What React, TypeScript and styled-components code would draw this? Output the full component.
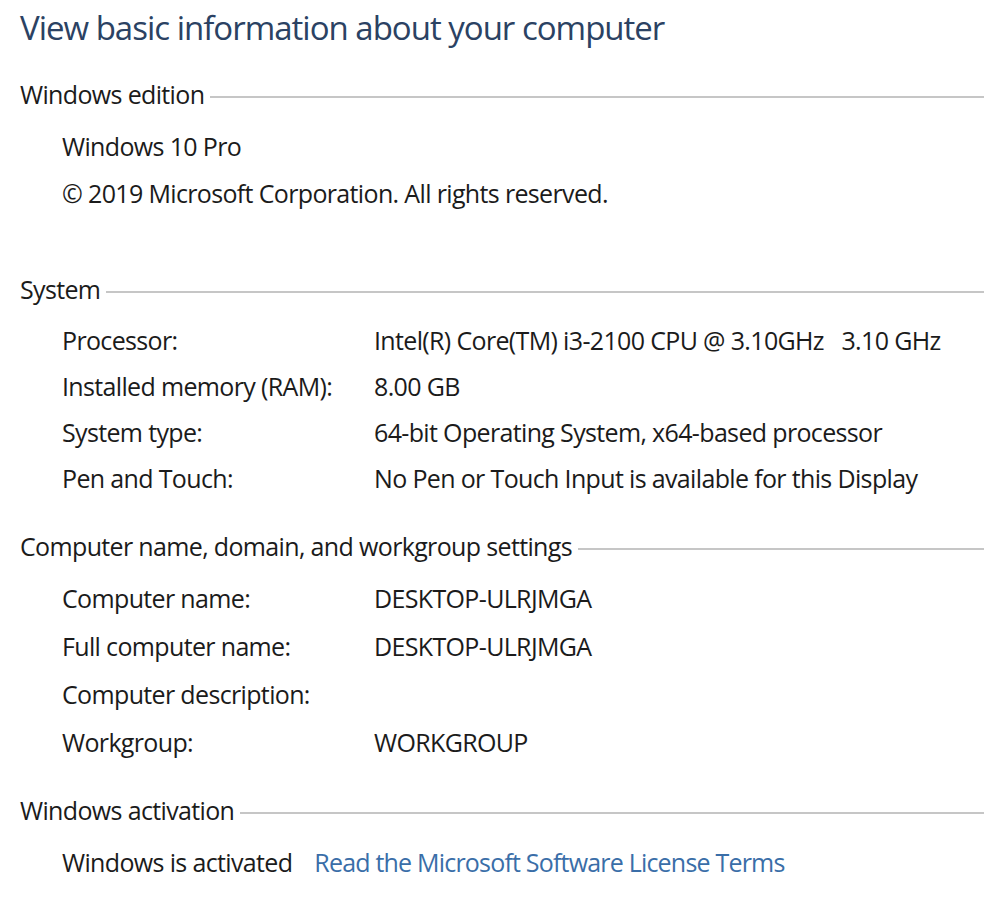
import styled, { createGlobalStyle } from 'styled-components'

const GlobalStyle = createGlobalStyle`
  html, body {
    margin: 0;
    padding: 0;
    background: #ffffff;
  }
  body {
    font-family: 'Open Sans', 'Noto Sans', sans-serif;
    color: #1b1b1b;
  }
`

interface Row {
  label: string
  value?: string
}

const systemRows: Row[] = [
  { label: 'Processor:', value: 'Intel(R) Core(TM) i3-2100 CPU @ 3.10GHz\u00a0\u00a0\u00a03.10 GHz' },
  { label: 'Installed memory (RAM):', value: '8.00 GB' },
  { label: 'System type:', value: '64-bit Operating System, x64-based processor' },
  { label: 'Pen and Touch:', value: 'No Pen or Touch Input is available for this Display' },
]

const nameRows: Row[] = [
  { label: 'Computer name:', value: 'DESKTOP-ULRJMGA' },
  { label: 'Full computer name:', value: 'DESKTOP-ULRJMGA' },
  { label: 'Computer description:' },
  { label: 'Workgroup:', value: 'WORKGROUP' },
]

function Section({
  title,
  gap,
  children,
}: {
  title: string
  gap: number
  children: React.ReactNode
}): JSX.Element {
  return (
    <SectionBox gap={gap}>
      <SectionHeader>
        <SectionTitle>{title}</SectionTitle>
        <Rule />
      </SectionHeader>
      {children}
    </SectionBox>
  )
}

function App(): JSX.Element {
  return (
    <Page>
      <GlobalStyle />
      <Title>View basic information about your computer</Title>

      <Section title="Windows edition" gap={18}>
        <Rows rowHeight={47}>
          <Text>Windows 10 Pro</Text>
          <Text>© 2019 Microsoft Corporation. All rights reserved.</Text>
        </Rows>
      </Section>

      <Section title="System" gap={53}>
        <Rows rowHeight={46}>
          {systemRows.map((r) => (
            <InfoRow key={r.label}>
              <Text>{r.label}</Text>
              <Text>{r.value}</Text>
            </InfoRow>
          ))}
        </Rows>
      </Section>

      <Section title="Computer name, domain, and workgroup settings" gap={25}>
        <Rows rowHeight={48}>
          {nameRows.map((r) => (
            <InfoRow key={r.label}>
              <Text>{r.label}</Text>
              <Text>{r.value ?? ''}</Text>
            </InfoRow>
          ))}
        </Rows>
      </Section>

      <Section title="Windows activation" gap={24}>
        <Rows rowHeight={48}>
          <ActivationRow>
            <Text>Windows is activated</Text>
            <Link href="#">Read the Microsoft Software License Terms</Link>
          </ActivationRow>
        </Rows>
      </Section>
    </Page>
  )
}

export default App

const Page = styled.div`
  width: 984px;
  height: 900px;
  overflow: hidden;
  padding-left: 20px;
  box-sizing: border-box;
`

const Title = styled.h1`
  margin: 0;
  height: 56px;
  line-height: 56px;
  font-size: 33px;
  font-weight: 400;
  letter-spacing: -1px;
  color: #2b4263;
`

const SectionBox = styled.section<{ gap: number }>`
  margin-top: ${({ gap }) => gap}px;
`

const SectionHeader = styled.div`
  display: flex;
  align-items: center;
  height: 40px;
`

const SectionTitle = styled.span`
  font-size: 25px;
  letter-spacing: -0.65px;
  white-space: nowrap;
  margin-right: 6px;
`

const Rule = styled.div`
  flex: 1;
  height: 2px;
  margin-top: 5px;
  background: #c6c6c6;
`

const Rows = styled.div<{ rowHeight: number }>`
  margin-top: 8px;
  padding-left: 42px;
  display: grid;
  grid-auto-rows: ${({ rowHeight }) => rowHeight}px;
  align-items: center;
`

const InfoRow = styled.div`
  display: grid;
  grid-template-columns: 312px 1fr;
  align-items: center;
`

const ActivationRow = styled.div`
  display: flex;
  align-items: center;
  gap: 22px;
`

const Text = styled.span`
  font-size: 25px;
  letter-spacing: -0.65px;
  white-space: nowrap;
`

const Link = styled.a`
  font-size: 25px;
  letter-spacing: -0.8px;
  white-space: nowrap;
  color: #3a6ea8;
  text-decoration: none;
`
